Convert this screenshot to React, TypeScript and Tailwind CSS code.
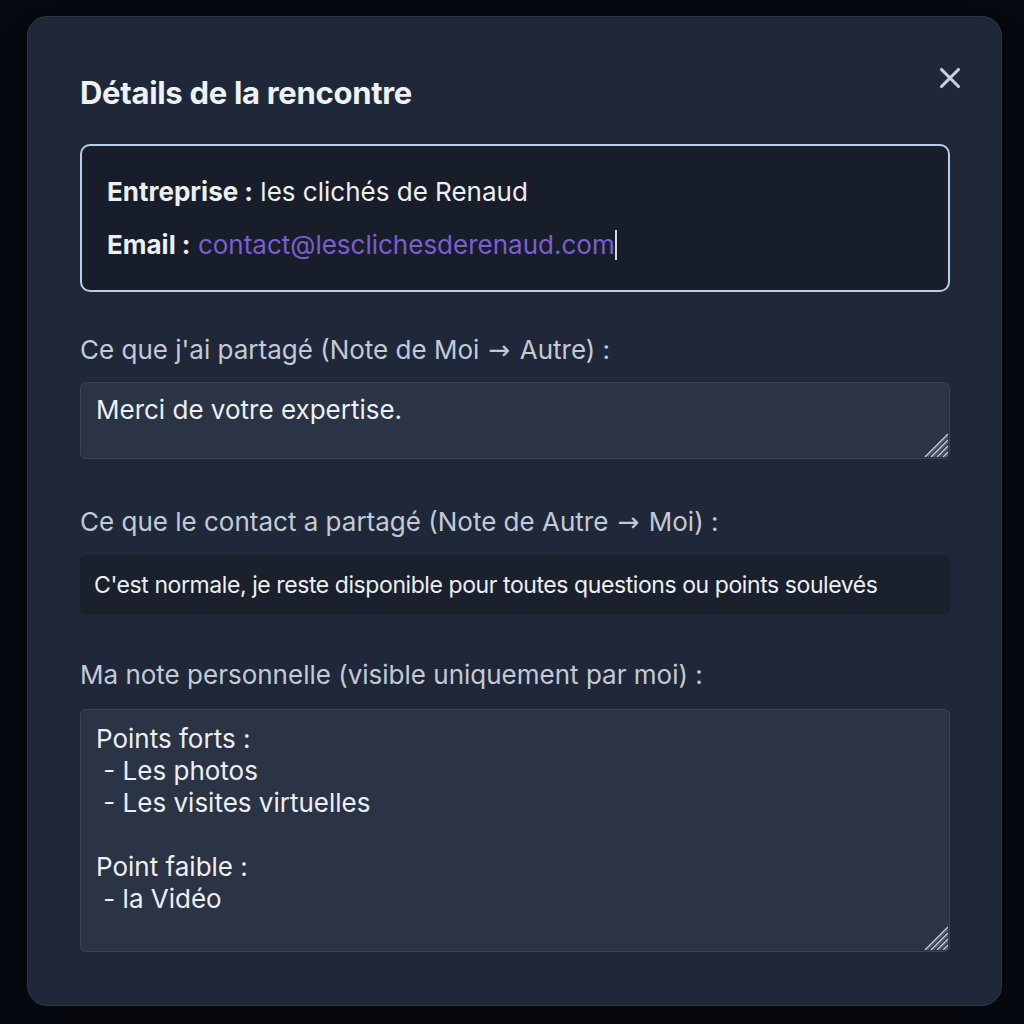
import React from 'react';
import { X } from 'lucide-react';

const personalNote = `Points forts :
 - Les photos
 - Les visites virtuelles

Point faible :
 - la Vidéo`;

// wider, thin arrow glyph
const Arrow = () => <span className="px-[2px] font-['DejaVu_Sans',sans-serif]">→</span>;

// striped resize grip in the textarea corner
const Grip = () => (
  <svg width="24" height="24" viewBox="0 0 24 24" className="pointer-events-none absolute right-[2px] bottom-[2px]">
    {[1, 7, 13, 19].map((k) => (
      <g key={k}>
        <line x1={24} y1={k} x2={k} y2={24} stroke="#c9ced6" strokeWidth="1.4" />
        <line x1={24} y1={k + 2.5} x2={k + 2.5} y2={24} stroke="#5b6475" strokeWidth="1.2" />
      </g>
    ))}
  </svg>
);

export default function App() {
  return (
    <div className="min-h-screen w-full bg-[#060910] px-[27px] pt-[16px] pb-[18px] font-['Inter',sans-serif]">
      <div className="relative w-[975px] h-[990px] rounded-[20px] border border-[#2c3646] bg-[#1f2838] pl-[52px] pr-[51px] pt-[56px] shadow-2xl">
        <button className="absolute right-[34px] top-[44px] text-[#c9d0dc]">
          <X className="w-[34px] h-[34px]" strokeWidth={2.2} />
        </button>

        <h2 className="text-[31px] leading-[40px] font-bold text-[#eef1f5] tracking-[-0.3px]">
          Détails de la rencontre
        </h2>

        {/* Company card */}
        <div className="mt-[31px] h-[148px] rounded-[10px] border-2 border-[#b9ccec] bg-[#171d29] px-[25px] pt-[29px]">
          <p className="text-[26px] leading-[34px] text-[#eceff4]">
            <span className="font-bold">Entreprise :</span> les clichés de Renaud
          </p>
          <p className="mt-[19px] text-[26px] leading-[34px] text-[#eceff4]">
            <span className="font-bold">Email :</span>{' '}
            <span className="text-[#7b5fd0]">contact@lesclichesderenaud.com</span>
            <span className="inline-block w-[2px] h-[30px] bg-[#d4d8e0] align-[-6px]" />
          </p>
        </div>

        <label className="mt-[41px] block text-[26px] leading-[34px] text-[#c3cad6]">
          Ce que j'ai partagé (Note de Moi <Arrow /> Autre) :
        </label>
        <div className="relative mt-[15px]">
          <textarea
            readOnly
            defaultValue="Merci de votre expertise."
            className="block w-full h-[77px] resize-none rounded-[6px] border border-[#3a4456] bg-[#2b3445] px-[15px] pt-[11px] text-[26px] leading-[32px] text-[#eceff4] outline-none"
          />
          <Grip />
        </div>

        <label className="mt-[46px] block text-[26px] leading-[34px] text-[#c3cad6]">
          Ce que le contact a partagé (Note de Autre <Arrow /> Moi) :
        </label>
        <div className="mt-[16px] h-[60px] rounded-[6px] bg-[#1a202c] px-[14px] flex items-center text-[23px] text-[#eceff4] tracking-[-0.42px]">
          C'est normale, je reste disponible pour toutes questions ou points soulevés
        </div>

        <label className="mt-[43px] block text-[26px] leading-[34px] text-[#c3cad6]">
          Ma note personnelle (visible uniquement par moi) :
        </label>
        <div className="relative mt-[17px]">
          <textarea
            readOnly
            defaultValue={personalNote}
            className="block w-full h-[243px] resize-none rounded-[6px] border border-[#3a4456] bg-[#2b3445] px-[15px] pt-[13px] text-[26px] leading-[32px] text-[#eceff4] outline-none"
          />
          <Grip />
        </div>
      </div>
    </div>
  );
}
